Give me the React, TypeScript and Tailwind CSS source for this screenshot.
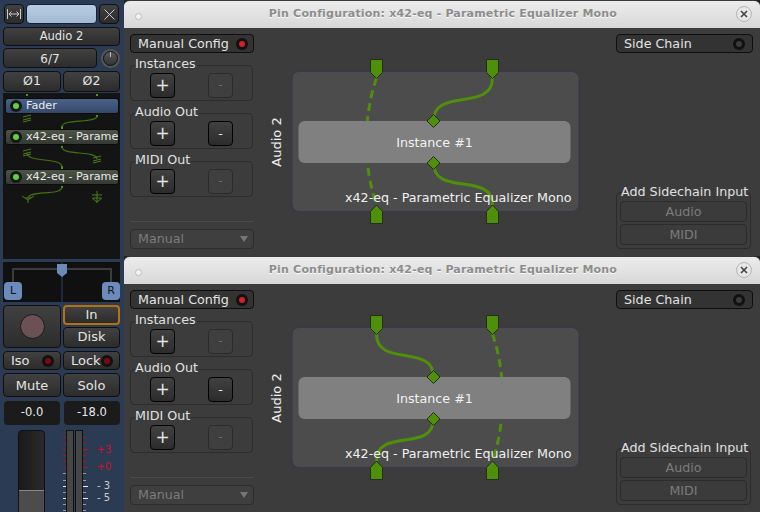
const FONT = "font-['DejaVu_Sans',sans-serif]";
const BTN = 'flex items-center justify-center rounded-[4px] border border-[#0f0f0f] bg-gradient-to-b from-[#414141] to-[#2c2c2c] text-[#e4e4e4] text-[13px] shrink-0';
const GREEN = '#4f8f0a';

function Led({ color = '#7a0a10', ring = '#111' }: { color?: string; ring?: string }) {
    return (
        <span className="flex h-[12px] w-[12px] shrink-0 items-center justify-center rounded-full" style={{ background: ring }}>
            <span className="h-[6px] w-[6px] rounded-full" style={{ background: color }} />
        </span>
    );
}

function PluginRow({ label, className }: { label: string; className: string }) {
    return (
        <div className={`absolute left-[2px] flex h-[16px] w-[114px] items-center gap-[4px] whitespace-nowrap rounded-[3px] border border-[#0c0c0c] pl-[4px] text-[11.2px] text-[#e8e8e8] bg-gradient-to-b ${className}`}>
            <Led color="#5fd33f" ring="#161616" />
            <span className="pt-[1px]">{label}</span>
        </div>
    );
}

function ProcessorWires() {
    const glyph = (x: number, y: number) => (
        <g stroke="#4a7f12" strokeWidth="1" fill="none">
            <path d={`M${x - 4} ${y - 2}L${x + 4} ${y - 4}M${x - 4} ${y + 1}L${x + 4} ${y - 1}M${x - 4} ${y + 3}L${x + 4} ${y + 1}`} />
        </g>
    );
    return (
        <svg className="absolute left-0 top-0" width="117" height="166" viewBox="3 93 117 166" fill="none">
            <g fill="#4f9a10">
                <rect x="26" y="94" width="2" height="2" />
                <rect x="96" y="94" width="2" height="2" />
                <rect x="61" y="126" width="2" height="3" />
                <rect x="61" y="146" width="2" height="2" />
                <rect x="61" y="166" width="2" height="3" />
                <rect x="61" y="186" width="2" height="2" />
                <rect x="96" y="115" width="2" height="2" />
            </g>
            <g stroke="#3f7410" strokeWidth="1.2">
                <path d="M97 116C97 124 62 118 62 127" />
                <path d="M62 147C62 156 97 150 97 159" />
                <path d="M27 153C27 163 62 157 62 167" />
                <path d="M62 187C62 196 28 190 28 198" />
            </g>
            {glyph(27, 119)}
            {glyph(27, 153)}
            {glyph(97, 160)}
            <path d="M22 196L28 200L34 196M25 198H31M28 200V203" stroke="#4a7f12" />
            <path d="M92 195H102M93 198H101M97 191V203M92 198L97 202L102 198" stroke="#4a7f12" />
        </svg>
    );
}

function Panner() {
    return (
        <div className="relative mx-[3px] mt-[3px] h-[40px] w-[117px] shrink-0 bg-[#101010]">
            <svg className="absolute left-0 top-0" width="117" height="40" viewBox="3 262 117 40" fill="none">
                <path d="M13 283V269H111V283" stroke="#3c3c3c" strokeWidth="2" />
                <path d="M62 262V302" stroke="#2c4468" />
                <path d="M57 264H67V273L62 277L57 273Z" fill="#6b8ab8" />
            </svg>
            <span className="absolute left-[1px] top-[20px] flex h-[18px] w-[18px] items-center justify-center rounded-[4px] bg-[#6b8bbd] text-[11px] text-[#111]">L</span>
            <span className="absolute right-0 top-[20px] flex h-[18px] w-[18px] items-center justify-center rounded-[4px] bg-[#6b8bbd] text-[11px] text-[#111]">R</span>
        </div>
    );
}

function Meter() {
    const red = [437, 443, 449, 455, 461, 467];
    const white = [473, 480, 486, 492, 498, 504, 510];
    const bright = [486, 498];
    return (
        <svg width="64" height="82" viewBox="60 430 64 82">
            <rect x="66.5" y="430.5" width="7" height="82" fill="#464646" stroke="#111" />
            <rect x="75.5" y="430.5" width="7" height="82" fill="#464646" stroke="#111" />
            {red.map((y) => (
                <g key={y} fill="#b01020">
                    <rect x="63" y={y} width="3" height="1" />
                    <rect x="83" y={y} width="3" height="1" />
                </g>
            ))}
            {white.map((y) => (
                <g key={y} fill={bright.includes(y) ? '#eee' : '#999'}>
                    <rect x="63" y={y} width="3" height="1" />
                    <rect x="83" y={y} width={bright.includes(y) ? 5 : 3} height="1" />
                </g>
            ))}
            <rect x="83" y="449" width="5" height="1" fill="#c01020" />
            <rect x="83" y="467" width="5" height="1" fill="#c01020" />
            <text x="96.5" y="453" fontSize="10" fill="#d0102a" fontFamily="DejaVu Sans">+3</text>
            <text x="96.5" y="470" fontSize="10" fill="#d0102a" fontFamily="DejaVu Sans">+0</text>
            <text x="97" y="489" fontSize="10" fill="#ccc" fontFamily="DejaVu Sans">- 3</text>
            <text x="97" y="501" fontSize="10" fill="#ccc" fontFamily="DejaVu Sans">- 5</text>
        </svg>
    );
}

function Strip() {
    return (
        <div className="flex h-[512px] w-[124px] shrink-0 flex-col overflow-hidden bg-[#2c3b54]">
            <div className="mt-[4px] flex h-[20px] shrink-0 gap-[2px] px-[4px]">
                <div className={`${BTN} w-[20px]`}>
                    <svg width="14" height="12" viewBox="0 0 14 12" fill="none" stroke="#ccc">
                        <path d="M.5 1V11M13.5 1V11M2 6H12M4.5 3.5L2 6L4.5 8.5M9.5 3.5L12 6L9.5 8.5" />
                    </svg>
                </div>
                <div className="w-[71px] rounded-[4px] border border-[#17202e] bg-gradient-to-b from-[#b7cde2] to-[#a2bad2]" />
                <div className={`${BTN} w-[20px]`}>
                    <svg width="11" height="11" viewBox="0 0 11 11" stroke="#ccc">
                        <path d="M.5 .5L10.5 10.5M10.5 .5L.5 10.5" />
                    </svg>
                </div>
            </div>
            <div className={`${BTN} mx-[3px] mt-[3px] h-[19px] w-[117px] pt-[1px] !text-[11.5px]`}>Audio 2</div>
            <div className="mt-[2px] flex h-[20px] shrink-0 items-center gap-[4px] px-[3px]">
                <div className={`${BTN} h-[20px] w-[94px] pt-[1px] !text-[12px]`}>6/7</div>
                <div className="flex h-[19px] w-[19px] items-center justify-center rounded-full bg-[#555]">
                    <div className="relative h-[15px] w-[15px] rounded-full border border-[#111] bg-gradient-to-b from-[#5a5a5a] to-[#333]">
                        <span className="absolute left-[6px] top-0 h-[5px] w-[1px] bg-[#bbb]" />
                    </div>
                </div>
            </div>
            <div className="mt-[3px] flex h-[21px] shrink-0 gap-[2px] px-[3px]">
                <div className={`${BTN} w-[58px] !text-[12.5px]`}>Ø1</div>
                <div className={`${BTN} w-[57px] !text-[12.5px]`}>Ø2</div>
            </div>
            <div className="relative mx-[3px] mt-[1px] h-[166px] w-[117px] shrink-0 bg-[#141414]">
                <ProcessorWires />
                <PluginRow label="Fader" className="top-[5px] from-[#4a6288] to-[#34486a]" />
                <PluginRow label="x42-eq - Parame" className="top-[36px] from-[#4b5446] to-[#343a31]" />
                <PluginRow label="x42-eq - Parame" className="top-[76px] from-[#4b5446] to-[#343a31]" />
            </div>
            <Panner />
            <div className="mt-[3px] flex h-[43px] shrink-0 gap-[2px] px-[3px]">
                <div className={`${BTN} w-[58px]`}>
                    <span className="h-[25px] w-[25px] rounded-full border border-[#1a1a1a] bg-[#6b5054]" />
                </div>
                <div className="flex w-[57px] flex-col gap-[2px]">
                    <div className={`${BTN} h-[20px] pb-[1px] !border-2 !border-[#b5700f]`}>In</div>
                    <div className={`${BTN} h-[21px] pb-[1px]`}>Disk</div>
                </div>
            </div>
            <div className="mt-[3px] flex h-[19px] shrink-0 gap-[2px] px-[3px]">
                <div className={`${BTN} w-[58px] !justify-between pl-[7px] pr-[6px]`}>Iso<Led /></div>
                <div className={`${BTN} w-[57px] !justify-between pl-[7px] pr-[6px]`}>Lock<Led /></div>
            </div>
            <div className="mt-[3px] flex h-[24px] shrink-0 gap-[2px] px-[3px]">
                <div className={`${BTN} w-[58px] pt-[1px]`}>Mute</div>
                <div className={`${BTN} w-[57px] pt-[1px]`}>Solo</div>
            </div>
            <div className="mt-[4px] flex h-[24px] shrink-0 gap-[4px] px-[4px] text-[11.5px] text-[#e8e8e8]">
                <div className="flex w-[56px] items-center justify-center rounded-[4px] bg-[#1b1b1b]">-0.0</div>
                <div className="flex w-[56px] items-center justify-center rounded-[4px] bg-[#1b1b1b]">-18.0</div>
            </div>
            <div className="mt-[5px] flex h-[82px] shrink-0 overflow-hidden">
                <div className="ml-[18px] flex h-[90px] w-[27px] flex-col overflow-hidden rounded-t-[4px] border border-[#111] bg-gradient-to-r from-[#1a1a1a] to-[#2a2a2a]">
                    <div className="h-[59px]" />
                    <div className="flex-1 border-t border-[#888] bg-[#4c4c4c]" />
                </div>
                <div className="ml-[15px]">
                    <Meter />
                </div>
            </div>
        </div>
    );
}

function Group({ title, minusActive }: { title: string; minusActive?: boolean }) {
    return (
        <div className="relative mt-[12px] h-[36px] w-[123px] rounded-[4px] border border-[#2c2c2c]">
            <span className="absolute -top-[10px] left-[4px] bg-[#3c3c3c] pr-[1px] text-[12.7px] leading-[15px] text-[#e0e0e0]">{title}</span>
            <div className="flex justify-between px-[19px] pt-[7px]">
                <div className={`${BTN} h-[25px] w-[25px] !border-black !text-[17px] leading-none`}>+</div>
                <div className={minusActive ? `${BTN} h-[25px] w-[25px] !border-black` : 'flex h-[25px] w-[25px] items-center justify-center rounded-[4px] border border-[#2b2b2b] bg-[#3f3f3f] text-[11px] text-[#777]'}>-</div>
            </div>
        </div>
    );
}

function PinDiagram({ second }: { second?: boolean }) {
    const top = (x: number) => `M${x - 6} 59.5H${x + 6}V72.5L${x} 78.5L${x - 6} 72.5Z`;
    const bottom = (x: number) => `M${x - 6} 223.5H${x + 6}V211.5L${x} 205L${x - 6} 211.5Z`;
    const diamond = (y: number) => `M433.5 ${y - 6.5}L440 ${y}L433.5 ${y + 6.5}L427 ${y}Z`;
    return (
        <svg className="absolute left-0 top-0" width="362" height="228" viewBox="254 28 362 228" fill="none">
            <rect x="292" y="71.5" width="287" height="140" rx="7" fill="#4c4c4c" stroke="#37374f" />
            <text x="281" y="142" fontSize="13" fill="#f0f0f0" fontFamily="DejaVu Sans" textAnchor="middle" transform="rotate(-90 281 142)">Audio 2</text>
            {second ? (
                <g stroke={GREEN} strokeWidth="3">
                    <path d="M492.5 78C506 118 506 165 492.5 205" strokeDasharray="8 5" />
                    <path d="M376.5 78C376.5 112 433.5 87 433.5 121" />
                    <path d="M433.5 163C433.5 197 376.5 171 376.5 205" />
                </g>
            ) : (
                <g stroke={GREEN} strokeWidth="3">
                    <path d="M376.5 78C363 118 363 165 376.5 205" strokeDasharray="8 5" />
                    <path d="M492.5 78C492.5 112 433.5 87 433.5 121" />
                    <path d="M433.5 163C433.5 197 492.5 171 492.5 205" />
                </g>
            )}
            <rect x="298.5" y="121" width="272" height="42" rx="6" fill="#808080" />
            <g fill={GREEN} stroke="#23300f">
                <path d={top(376.5)} />
                <path d={top(492.5)} />
                <path d={bottom(376.5)} />
                <path d={bottom(492.5)} />
                <path d={diamond(121)} />
                <path d={diamond(163)} />
            </g>
            <text x="434.5" y="147" fontSize="12.7" fill="#f2f2f2" fontFamily="DejaVu Sans" textAnchor="middle">Instance #1</text>
            <text x="345" y="202" fontSize="12.7" fill="#f0f0f0" fontFamily="DejaVu Sans">x42-eq - Parametric Equalizer Mono</text>
        </svg>
    );
}

function PinWindow({ second }: { second?: boolean }) {
    return (
        <div className="flex h-[256px] flex-col overflow-hidden rounded-t-[6px] border-t border-[#3a3a3a] bg-[#3c3c3c]">
            <div className="relative flex h-[27px] shrink-0 items-center justify-center bg-gradient-to-b from-[#ececec] to-[#d8d8d8] pl-[2px]">
                <span className="absolute left-[11px] top-[12px] h-[7px] w-[7px] rounded-full border border-[#bbb] bg-[#f4f4f4]" />
                <span className="text-[11px] font-bold tracking-[0.19px] text-[#8c8c8c] [text-shadow:0_1px_0_#fff]">Pin Configuration: x42-eq - Parametric Equalizer Mono</span>
                <span className="absolute right-[8px] top-[5px] flex h-[16px] w-[16px] items-center justify-center rounded-full border border-[#b4b4b4] bg-[#e6e6e6]">
                    <svg width="8" height="8" viewBox="0 0 8 8" stroke="#444" strokeWidth="1.6">
                        <path d="M1 1L7 7M7 1L1 7" />
                    </svg>
                </span>
            </div>
            <div className="flex min-h-0 flex-1">
                <div className="flex w-[130px] shrink-0 flex-col pl-[6px] pt-[6px]">
                    <div className={`${BTN} h-[19px] w-[124px] !justify-between !bg-none !bg-[#333] pl-[7px] pr-[5px] pt-[1px] !text-[12.7px]`}>
                        Manual Config <Led color="#d81f26" />
                    </div>
                    <Group title="Instances" />
                    <Group title="Audio Out" minusActive />
                    <Group title="MIDI Out" />
                    <div className="mt-[24px] h-px w-[124px] bg-[#4a4a4a]" />
                    <div className="mt-[7px] flex h-[20px] w-[124px] items-center justify-between rounded-[4px] border border-[#2c2c2c] bg-[#3f3f3f] pl-[7px] pr-[5px] text-[12.7px] text-[#7c7c7c]">
                        Manual
                        <span className="h-0 w-0 border-x-[4px] border-t-[6px] border-x-transparent border-t-[#777]" />
                    </div>
                </div>
                <div className="relative flex-1">
                    <PinDiagram second={second} />
                </div>
                <div className="flex w-[144px] shrink-0 flex-col pr-[7px] pt-[6px]">
                    <div className={`${BTN} h-[19px] w-[137px] !justify-between !bg-none !bg-[#333] pl-[7px] pr-[7px] pt-[1px] !text-[12.7px]`}>
                        Side Chain <Led color="#3c3c3c" />
                    </div>
                    <div className="relative mt-[139px] h-[57px] w-[135px] rounded-[4px] border border-[#2c2c2c]">
                        <span className="absolute -top-[9px] left-[4px] whitespace-nowrap bg-[#3c3c3c] text-[12.7px] leading-[15px] text-[#e0e0e0]">Add Sidechain Input</span>
                        <div className="flex flex-col gap-[2px] px-[3px] pt-[8px] text-[12.7px] text-[#7c7c7c]">
                            <div className="flex h-[21px] items-center justify-center rounded-[4px] border border-[#2b2b2b] bg-[#3b3b3b] pt-[1px]">Audio</div>
                            <div className="flex h-[21px] items-center justify-center rounded-[4px] border border-[#2b2b2b] bg-[#3b3b3b] pt-[1px]">MIDI</div>
                        </div>
                    </div>
                </div>
            </div>
        </div>
    );
}

export default function App() {
    return (
        <div className={`flex h-[512px] w-[760px] overflow-hidden bg-[#222] ${FONT}`}>
            <Strip />
            <div className="flex w-[636px] flex-col">
                <PinWindow />
                <PinWindow second />
            </div>
        </div>
    );
}
